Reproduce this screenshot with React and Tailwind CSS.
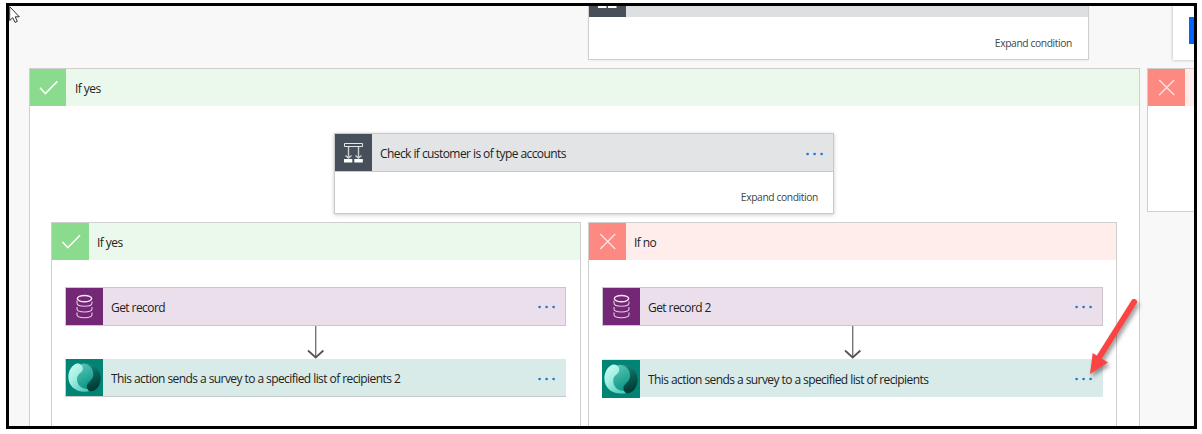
import React from 'react';

function CheckIcon({ className }) {
  return (
    <svg className={'h-[37px] shrink-0 bg-[#8adb8e] ' + className} viewBox="0 0 37 37" fill="none">
      <path d="M10.3 18.8L15.8 24.7L28 12.2" stroke="#fff" strokeWidth="1.6" />
    </svg>
  );
}

function CrossIcon() {
  return (
    <svg className="size-[37px] shrink-0 bg-[#fd8983]" viewBox="0 0 37 37" fill="none">
      <path d="M11.2 11L26.2 26M26.2 11L11.2 26" stroke="#ffe4e2" strokeWidth="1.3" />
    </svg>
  );
}

function ConditionIcon() {
  return (
    <svg className="size-[37px] shrink-0 bg-[#474f5a]" viewBox="0 0 37 37" fill="none">
      <path d="M9.5 9.5H27.5V12.5H9.5Z" stroke="#e4e6e8" strokeWidth="1" />
      <path d="M13.5 13V23M23.5 13V23M10.5 21.5L13.5 24L16.5 21.5M20.5 21.5L23.5 24L26.5 21.5" stroke="#c9ccd0" strokeWidth="1.4" />
      <path d="M9 25H17.3V28.6H9ZM19.3 25H27.8V28.6H19.3Z" fill="#fff" />
    </svg>
  );
}

function DatabaseIcon() {
  return (
    <svg className="size-[37px] shrink-0 bg-[#742774]" viewBox="0 0 37 37" fill="none">
      <ellipse cx="18.5" cy="10.6" rx="7.2" ry="3.1" stroke="#f1e6f1" strokeWidth="1.4" />
      <path
        d="M11 12.5V15C11 17 14.5 18.3 18.5 18.3S26 17 26 15V13.5M11 19V20.8C11 22.8 14.5 24 18.5 24S26 22.8 26 20.8V19M11 24.5V26.6C11 28.6 14.5 29.8 18.5 29.8S26 28.6 26 26.6V24.5"
        stroke="#e2cde2"
        strokeWidth="1.1"
      />
    </svg>
  );
}

function SurveyIcon({ className }) {
  return (
    <svg className={'shrink-0 bg-[#008575] ' + className} viewBox="0 0 111 111">
      <defs>
        <linearGradient id="lobeLight" x1="0" y1="0" x2="0.7" y2="1">
          <stop offset="0" stopColor="#d3fbf4" />
          <stop offset="0.5" stopColor="#a0efe2" />
          <stop offset="1" stopColor="#55cdbd" />
        </linearGradient>
        <linearGradient id="lobeMiddle" x1="0" y1="0" x2="0.3" y2="1">
          <stop offset="0" stopColor="#5cc9ba" />
          <stop offset="1" stopColor="#0a9483" />
        </linearGradient>
        <linearGradient id="lobeDark" x1="0" y1="0" x2="0.3" y2="1">
          <stop offset="0" stopColor="#1f9588" />
          <stop offset="0.6" stopColor="#075c52" />
          <stop offset="1" stopColor="#003d36" />
        </linearGradient>
      </defs>
      <path d="M46 13C80 8 104 28 104 57C104 77 93 94 78 97C66 99 60 88 63 79C68 70 82 62 80 44C78 27 65 20 46 22Z" fill="url(#lobeDark)" />
      <path d="M46 15C66 11 82 26 82 46C82 66 62 66 62 82C63 92 68 96 74 97C52 101 32 84 32 62C34 44 54 40 46 15Z" fill="url(#lobeMiddle)" />
      <path d="M30 14C42 11 53 20 50 32C47 42 33 45 33 61C33 78 45 89 64 90L68 97C34 103 7 84 7 54C7 38 15 20 30 14Z" fill="url(#lobeLight)" />
    </svg>
  );
}

function Dots({ className }) {
  return (
    <svg className={'h-1 w-[18px] shrink-0 ' + className} viewBox="0 0 18 4" fill="#2479d6">
      <circle cx="1.6" cy="2" r="1.35" />
      <circle cx="8.6" cy="2" r="1.35" />
      <circle cx="15.6" cy="2" r="1.35" />
    </svg>
  );
}

function BranchHeader({ yes, title, iconClass = 'w-[37px]', titleClass = 'ml-2' }) {
  return (
    <div className={'flex h-[37px] items-center ' + (yes ? 'bg-[#ebf9ed]' : 'bg-[#ffedeb]')}>
      {yes ? <CheckIcon className={iconClass} /> : <CrossIcon />}
      <span className={'pt-[2px] ' + titleClass}>{title}</span>
    </div>
  );
}

function ConnectorArrow() {
  return (
    <svg className="h-[33px] w-[18px] self-center" viewBox="0 0 18 33" fill="none">
      <path d="M8.7 0V31" stroke="#777" strokeWidth="1.4" />
      <path d="M1 24.5L8.7 31.5L16.4 24.5" stroke="#555" strokeWidth="1.8" />
    </svg>
  );
}

function Branch({ yes, title, record, action, wide }) {
  return (
    <div className={'flex flex-col border border-b-0 border-[#cfcfcf] bg-white ' + (wide ? 'w-[530px]' : 'w-[529px]')}>
      <BranchHeader yes={yes} title={title} />
      <div className="flex flex-col pl-[13px] pt-[27px]">
        <div className="flex w-[501px] flex-col">
          <div className="flex h-[39px] items-center border border-[#cbc6cb] bg-[#ebdfeb]">
            <DatabaseIcon />
            <span className="ml-2 grow pt-[2px]">{record}</span>
            <Dots className="mr-[9px] mt-px" />
          </div>
          <ConnectorArrow />
          <div className={'flex h-[38px] items-center bg-[#d9ebe9] ' + (yes ? 'border-b border-l border-[#c4cccb]' : '')}>
            {yes ? <SurveyIcon className="size-[37px]" /> : <SurveyIcon className="relative top-px size-[38px]" />}
            <span className="ml-2 grow pt-[3px]">{action}</span>
            <Dots className="mr-[10px] mt-[2px]" />
          </div>
        </div>
      </div>
    </div>
  );
}

export default function App() {
  return (
    <div className="relative h-[434px] w-[1202px] overflow-hidden bg-white pl-[6px] pt-[3px] font-['Open_Sans','Noto_Sans',sans-serif] text-[12px] leading-4 tracking-[-0.57px] text-[#222]">
      <div className="flex h-[426px] w-[1191px] flex-col overflow-hidden border-[3px] border-black bg-[#f8f8f8]">
        <div className="flex h-[62px] shrink-0 items-start">
          <div className="ml-[579px] flex h-[54px] w-[501px] shrink-0 flex-col border border-t-0 border-[#cfcfcf] bg-white shadow-xs">
            <div className="flex h-[11px] bg-[#dedfe1]">
              <svg className="h-[11px] w-[37px] bg-[#474f5a]" viewBox="0 0 37 11">
                <path d="M9 0H17.5V2H9ZM19 0H27.5V2H19Z" fill="#fff" />
              </svg>
            </div>
            <div className="flex grow items-center justify-end pr-4 pt-[9px] text-[10.3px] tracking-[-0.4px] text-[#444]">Expand condition</div>
          </div>
          <div className="ml-[84px] flex h-[54px] w-[40px] shrink-0 bg-white pl-4 pt-[11px] shadow-[0_0_3px_#aaa]">
            <div className="h-[27px] w-6 bg-[#0064ff]" />
          </div>
        </div>
        <div className="flex h-[360px] shrink-0 items-start gap-[7px] pl-[20px]">
          <div className="flex h-[360px] w-[1111px] shrink-0 flex-col border border-[#cfcfcf] bg-white">
            <BranchHeader yes title="If yes" iconClass="w-[36px]" titleClass="ml-[9px]" />
            <div className="ml-[304px] mt-[27px] flex h-[81px] w-[500px] shrink-0 flex-col border border-[#c8c8c8] bg-white shadow-[0_1px_4px_#ccc]">
              <div className="flex h-[38px] items-center border-b border-[#c8c9cb] bg-[#e3e4e6]">
                <ConditionIcon />
                <span className="ml-2 grow pt-[2px]">Check if customer is of type accounts</span>
                <Dots className="mr-[9px] mt-[2px]" />
              </div>
              <div className="flex grow items-center justify-end pr-[15px] pt-[9px] text-[10.3px] tracking-[-0.4px] text-[#444]">Expand condition</div>
            </div>
            <div className="ml-[21px] mt-2 flex h-[220px] shrink-0 gap-[7px]">
              <Branch yes wide title="If yes" record="Get record" action="This action sends a survey to a specified list of recipients 2" />
              <Branch title="If no" record="Get record 2" action="This action sends a survey to a specified list of recipients" />
            </div>
          </div>
          <div className="h-[144px] w-[80px] shrink-0 border border-[#cfcfcf] bg-white">
            <BranchHeader />
          </div>
        </div>
      </div>
      <svg className="absolute left-[9px] top-[6px] h-[19px] w-[13px]" viewBox="0 0 13 19">
        <path d="M.7 .7V14.5L3.8 11.7L6 16.4L8.3 15.4L6.2 10.8H10.3Z" fill="#fff" stroke="#333" strokeWidth="1" />
      </svg>
      <svg className="absolute left-[1080px] top-[290px] h-[95px] w-[70px] drop-shadow-[2px_3px_2px_rgba(0,0,0,0.4)]" viewBox="0 0 70 95">
        <path d="M54 12L20 66" stroke="#fd4444" strokeWidth="6" strokeLinecap="round" />
        <path d="M10 84L12.7 63L28 72.4Z" fill="#fd4444" />
      </svg>
    </div>
  );
}
